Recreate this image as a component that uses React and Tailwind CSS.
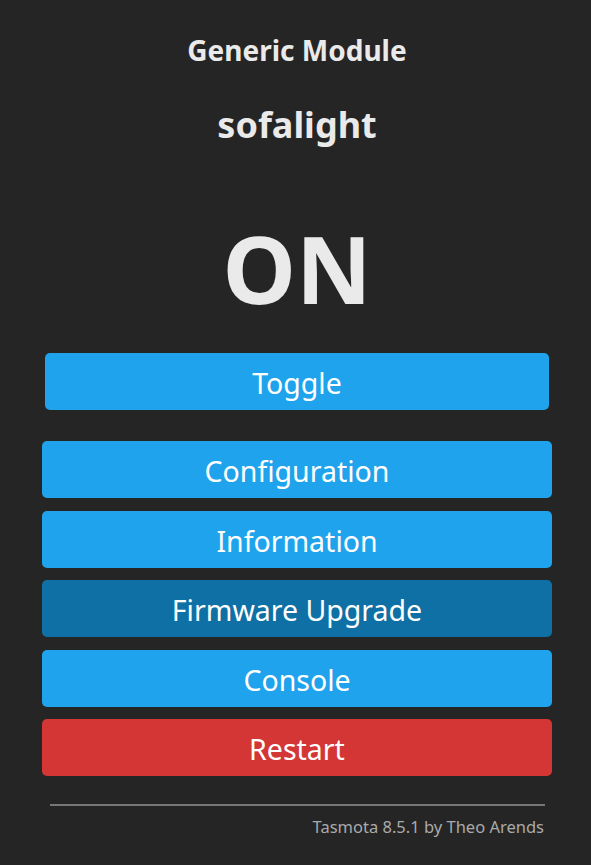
const buttons = [
  { label: 'Configuration', color: 'bg-[#1fa3ec]' },
  { label: 'Information', color: 'bg-[#1fa3ec]' },
  { label: 'Firmware Upgrade', color: 'bg-[#0e70a4]' },
  { label: 'Console', color: 'bg-[#1fa3ec]' },
  { label: 'Restart', color: 'bg-[#d43535]' }
]

const App = () => {
  return (
    <div className="min-h-screen bg-[#252525] text-[#eaeaea] font-['Noto_Sans',sans-serif]">
      <div className="ml-[42px] w-[510px] pt-[30px]">
        <div className="text-center">
          <h3 className="text-[28px] font-bold leading-[40px]">Generic Module</h3>
          <h2 className="mt-[32px] text-[36px] font-bold leading-[46px]">sofalight</h2>
        </div>

        <div className="mt-[70px] text-center text-[93px] font-bold leading-[100px]">ON</div>

        <div className="mt-[35px] px-[3px]">
          <button
            type="button"
            className="h-[57px] w-full rounded-[5px] bg-[#1fa3ec] pt-[3px] text-[28.5px] leading-[54px] text-white"
          >
            Toggle
          </button>
        </div>

        <div className="mt-[31px] flex flex-col gap-[12.5px]">
          {buttons.map((b) => (
            <button
              key={b.label}
              type="button"
              className={`h-[57px] w-full rounded-[5px] ${b.color} pt-[3px] text-[28.5px] leading-[54px] text-white`}
            >
              {b.label}
            </button>
          ))}
        </div>

        <div className="ml-[8px] mr-[7px] mt-[28px] border-t-2 border-[#777]" />
        <div className="mr-[8px] mt-[9px] text-right text-[16.5px] text-[#aaa]">
          Tasmota 8.5.1 by Theo Arends
        </div>
      </div>
    </div>
  )
}

export default App
